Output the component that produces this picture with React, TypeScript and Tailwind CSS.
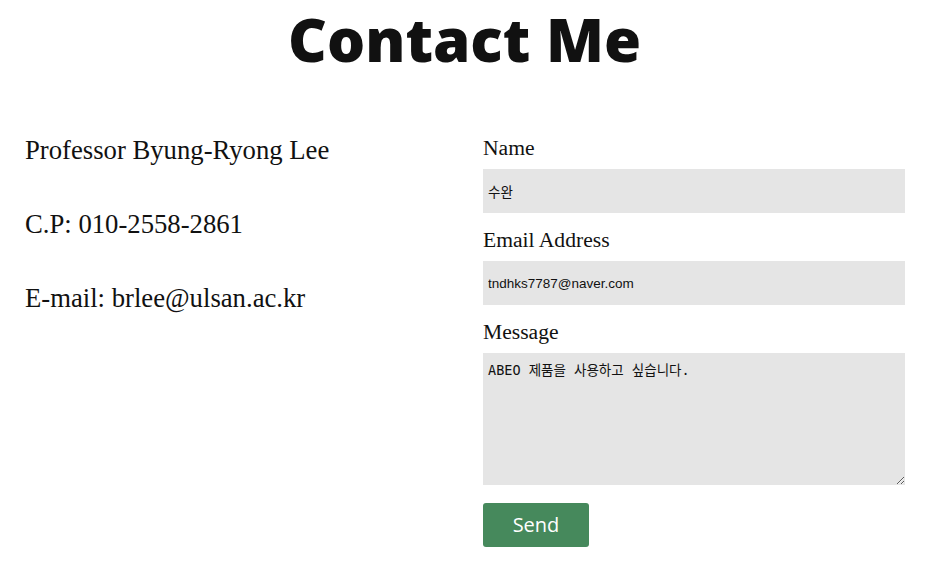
export default function App() {
  return (
    <div className="min-h-screen bg-white text-[#111] px-[25px]">
      <h1 className="-mt-[2px] text-center font-['Open_Sans',sans-serif] font-extrabold text-[60px] leading-[82px]">
        Contact Me
      </h1>
      <div className="grid grid-cols-[434px_422px] gap-[24px] mt-[53px]">
        <div className="font-['Liberation_Serif',serif] text-[26.7px] leading-[30px] flex flex-col gap-[44px] pt-[2px]">
          <p>Professor Byung-Ryong Lee</p>
          <p>C.P: 010-2558-2861</p>
          <p>E-mail: brlee@ulsan.ac.kr</p>
        </div>
        <form className="flex flex-col pt-[5px] font-['Liberation_Serif',serif] text-[21.6px]" onSubmit={(e) => e.preventDefault()}>
          <label className="leading-[24px] mt-[-2px] mb-[9px]">Name</label>
          <input
            defaultValue="수완"
            className="h-[44px] bg-[#e5e5e5] px-[5px] text-[13.5px] font-['Liberation_Sans','Noto_Sans_CJK_KR',sans-serif] outline-none"
          />
          <label className="leading-[24px] mt-[15px] mb-[9px]">Email Address</label>
          <input
            defaultValue="tndhks7787@naver.com"
            className="h-[44px] bg-[#e5e5e5] px-[5px] text-[13.5px] font-['Liberation_Sans','Noto_Sans_CJK_KR',sans-serif] outline-none"
          />
          <label className="leading-[24px] mt-[15px] mb-[9px]">Message</label>
          <textarea
            defaultValue="ABEO 제품을 사용하고 싶습니다."
            className="h-[132px] bg-[#e5e5e5] px-[5px] py-[7px] text-[13.5px] font-['DejaVu_Sans_Mono','Noto_Sans_CJK_KR',monospace] outline-none"
          />
          <button
            type="submit"
            className="mt-[18px] w-[106px] h-[44px] rounded-[3px] bg-[#46895c] text-white text-[20px] font-['Open_Sans',sans-serif]"
          >
            Send
          </button>
        </form>
      </div>
    </div>
  );
}
